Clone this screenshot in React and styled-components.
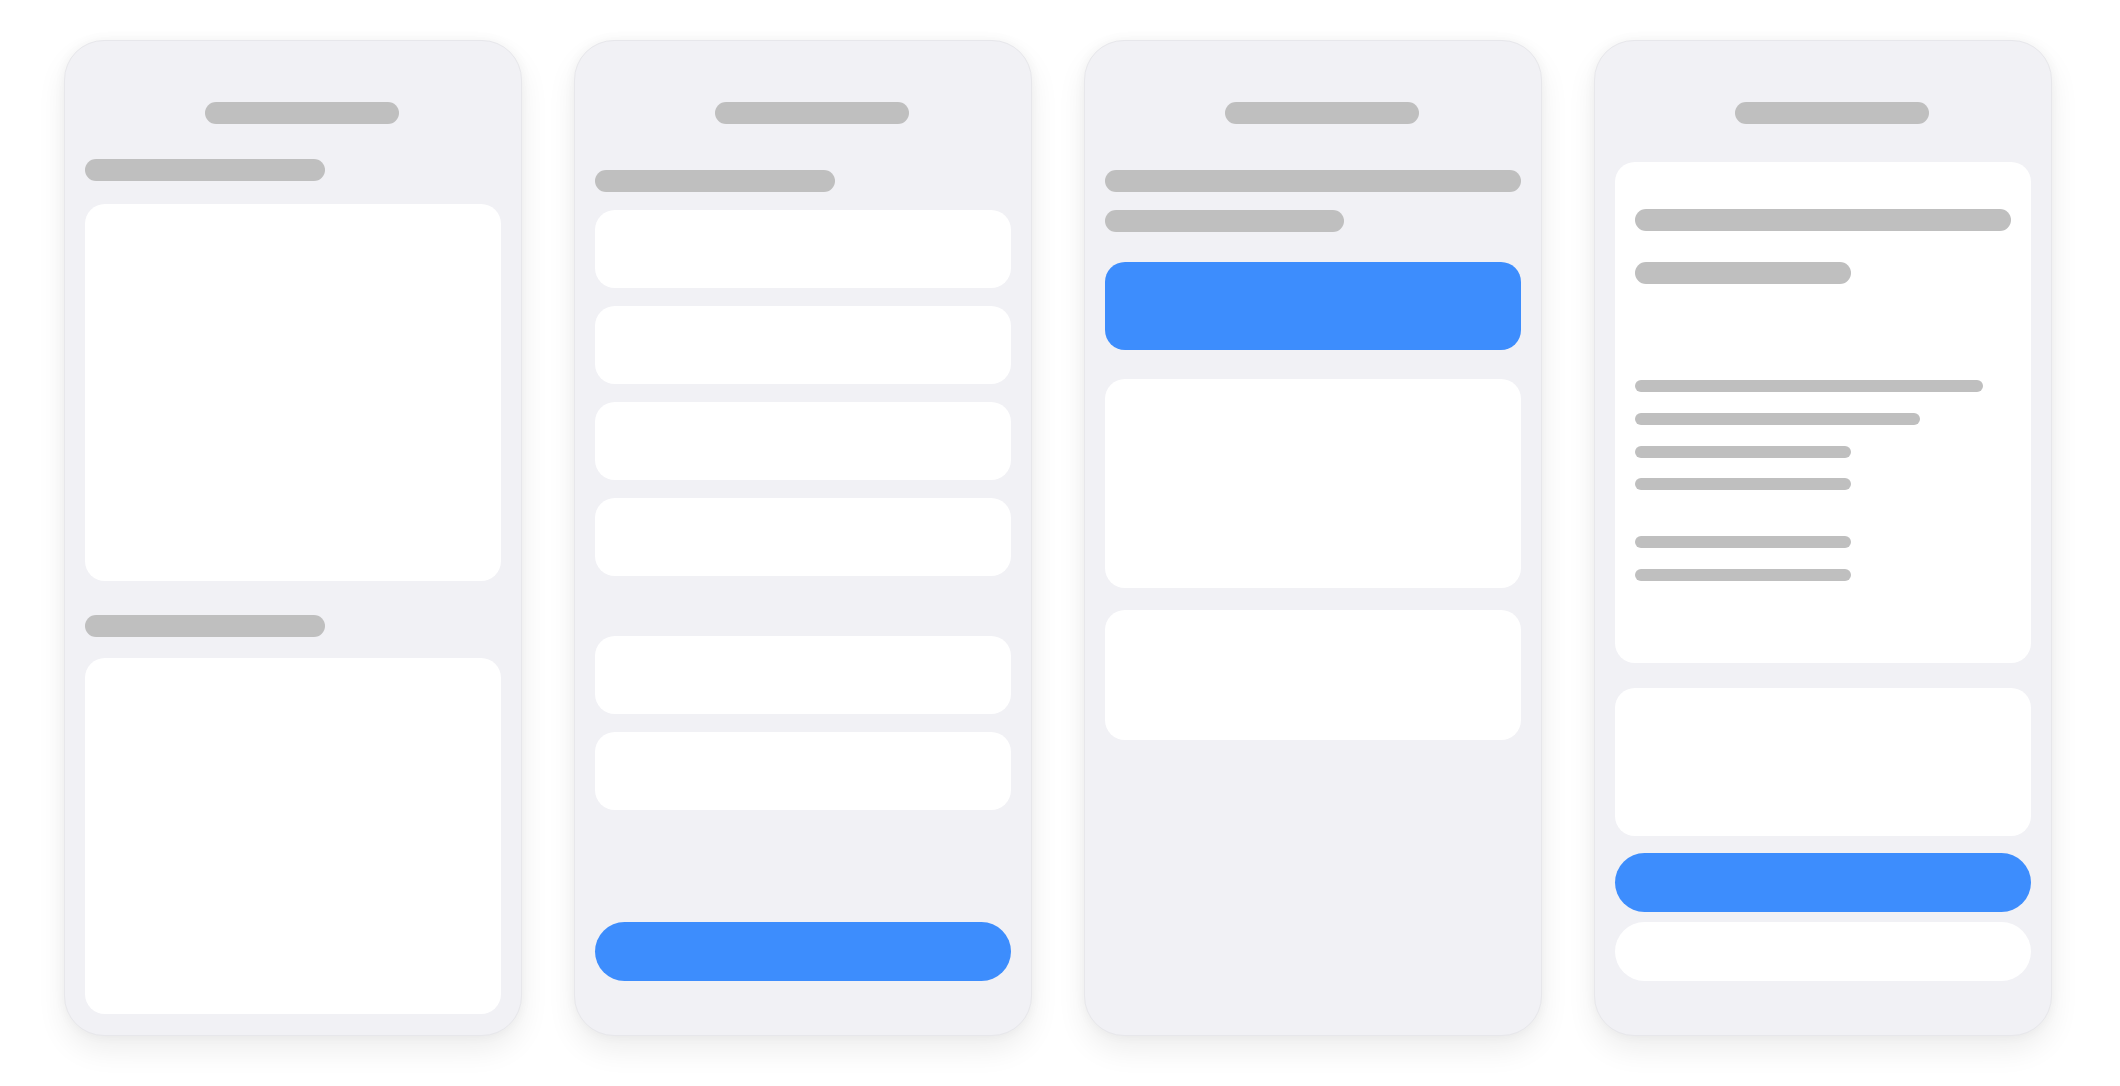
import React from 'react';
import styled, { createGlobalStyle } from 'styled-components';

const GlobalStyle = createGlobalStyle`
  html,
  body {
    margin: 0;
    padding: 0;
    background: #ffffff;
    font-family: 'Inter', 'Liberation Sans', sans-serif;
  }
`;

const Board = styled.div`
  display: flex;
  align-items: flex-start;
  gap: 52px;
  padding: 40px 0 0 64px;
  width: 2120px;
  height: 1086px;
  box-sizing: border-box;
`;

const Phone = styled.div`
  display: flex;
  flex-direction: column;
  flex: none;
  width: 458px;
  height: 996px;
  box-sizing: border-box;
  padding: 61px 20px 0 20px;
  background: #f1f1f5;
  border: 1px solid #e7e7eb;
  border-radius: 40px;
  box-shadow: 0 14px 30px rgba(0, 0, 0, 0.07), 0 0 12px rgba(0, 0, 0, 0.045);
`;

// grey placeholder line standing in for a heading or a row of text
const Bar = styled.div`
  flex: none;
  width: ${(p) => p.$w || '100%'};
  height: ${(p) => p.$h || 22}px;
  margin-top: ${(p) => p.$mt || 0}px;
  border-radius: 11px;
  background: #bfbfbf;
`;

const TitleBar = styled(Bar)`
  width: 194px;
  margin-left: 120px;
`;

const Card = styled.div`
  flex: none;
  height: ${(p) => p.$h}px;
  margin-top: ${(p) => p.$mt || 0}px;
  border-radius: 20px;
  background: #ffffff;
`;

const ContentCard = styled(Card)`
  display: flex;
  flex-direction: column;
  box-sizing: border-box;
  padding: 47px 20px 0 20px;
`;

const Line = styled(Bar)`
  border-radius: 6px;
`;

const BlueBlock = styled.div`
  flex: none;
  height: 88px;
  margin-top: ${(p) => p.$mt || 0}px;
  border-radius: 20px;
  background: #3d8dfd;
`;

const Pill = styled.div`
  flex: none;
  height: 59px;
  margin-top: ${(p) => p.$mt || 0}px;
  border-radius: 30px;
  background: ${(p) => (p.$primary ? '#3d8dfd' : '#ffffff')};
`;

const listRows = [210, 306, 402, 498];

const App = () => {
  return (
    <>
      <GlobalStyle />
      <Board>
        <Phone>
          <TitleBar />
          <Bar $w="240px" $mt={35} />
          <Card $h={377} $mt={23} />
          <Bar $w="240px" $mt={34} />
          <Card $h={356} $mt={21} />
        </Phone>

        <Phone>
          <TitleBar />
          <Bar $w="240px" $mt={46} />
          {listRows.map((row) => (
            <Card key={row} $h={78} $mt={18} />
          ))}
          <Card $h={78} $mt={60} />
          <Card $h={78} $mt={18} />
          <Pill $primary $mt={112} />
        </Phone>

        <Phone>
          <TitleBar />
          <Bar $mt={46} />
          <Bar $w="239px" $mt={18} />
          <BlueBlock $mt={30} />
          <Card $h={209} $mt={29} />
          <Card $h={130} $mt={22} />
        </Phone>

        <Phone>
          <TitleBar />
          <ContentCard $h={501} $mt={38}>
            <Bar />
            <Bar $w="216px" $mt={31} />
            <Line $w="348px" $h={12} $mt={96} />
            <Line $w="285px" $h={12} $mt={21} />
            <Line $w="216px" $h={12} $mt={21} />
            <Line $w="216px" $h={12} $mt={20} />
            <Line $w="216px" $h={12} $mt={46} />
            <Line $w="216px" $h={12} $mt={21} />
          </ContentCard>
          <Card $h={148} $mt={25} />
          <Pill $primary $mt={17} />
          <Pill $mt={10} />
        </Phone>
      </Board>
    </>
  );
};

export default App;
